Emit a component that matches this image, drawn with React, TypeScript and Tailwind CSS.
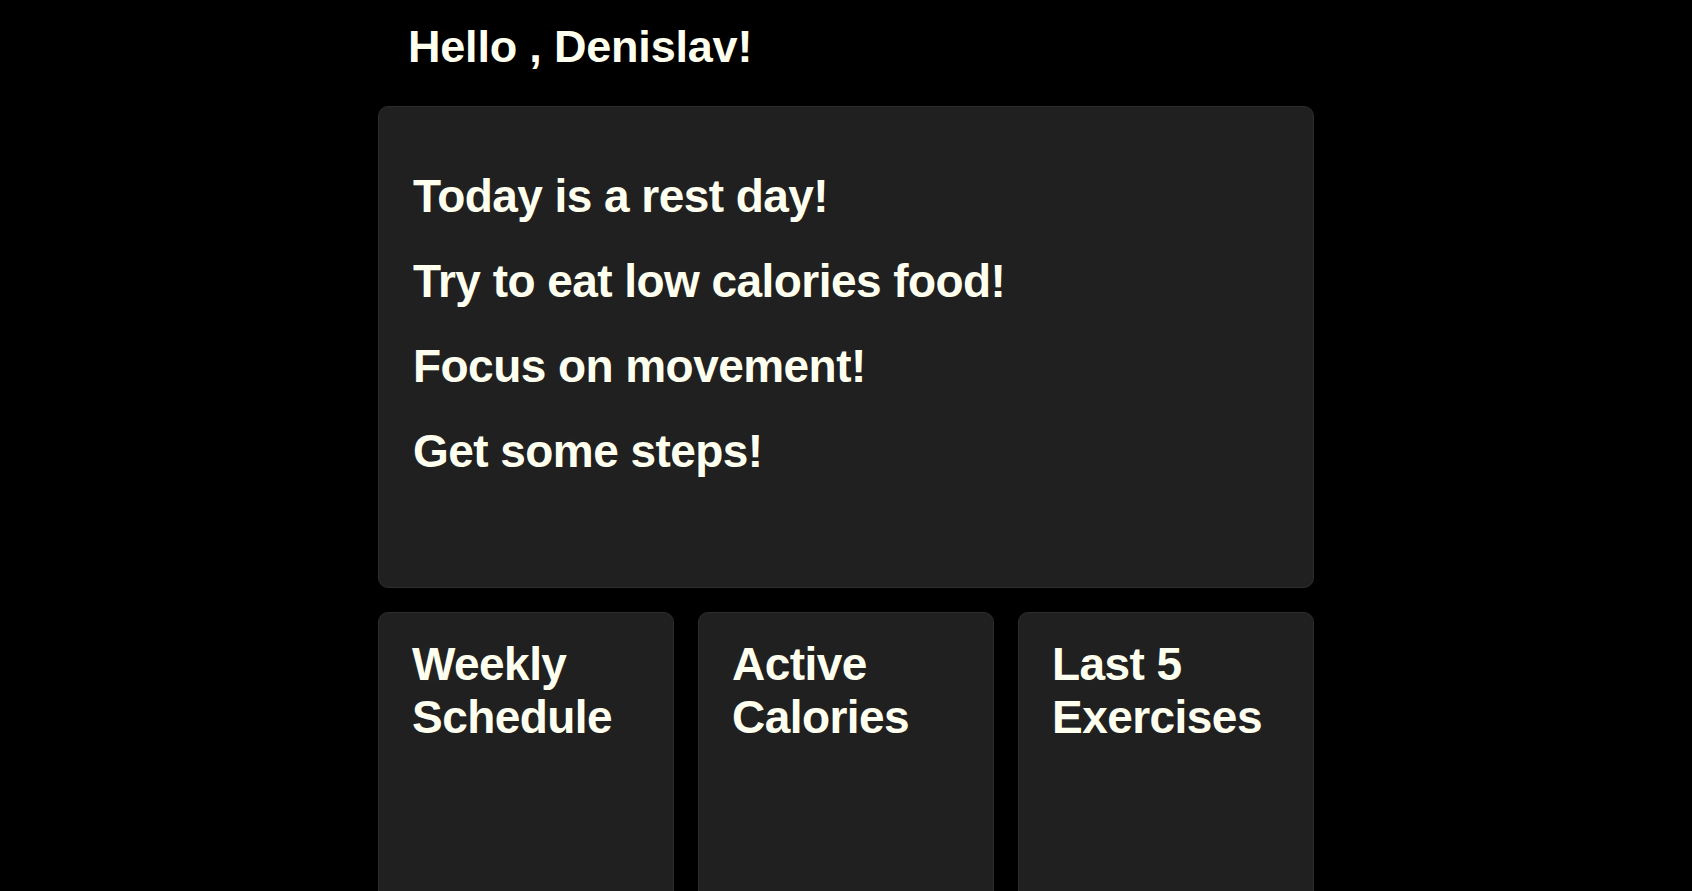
const tips = [
  "Today is a rest day!",
  "Try to eat low calories food!",
  "Focus on movement!",
  "Get some steps!",
];

const widgets = ["Weekly Schedule", "Active Calories", "Last 5 Exercises"];

export default function App() {
  return (
    <div className="min-h-screen bg-black font-['Liberation_Sans',Arial,sans-serif] text-[#fffff0]">
      <main className="mx-auto w-[936px]">
        <h1 className="pl-[30px] pt-[21px] text-[45px] font-bold leading-[1.15] tracking-[-0.2px]">
          Hello , Denislav!
        </h1>

        <section className="mt-[33px] h-[482px] rounded-[10px] border border-[#2c2c2c] bg-[#202020] px-[34px] pt-[63px]">
          <div className="flex flex-col gap-[32px]">
            {tips.map((tip) => (
              <h2
                key={tip}
                className="text-[46px] font-bold leading-[53px] tracking-[-0.55px] [text-shadow:0_0_24px_rgba(255,255,255,0.04)]"
              >
                {tip}
              </h2>
            ))}
          </div>
        </section>

        <section className="mt-[24px] grid grid-cols-3 gap-[24px]">
          {widgets.map((title) => (
            <div
              key={title}
              className="h-[420px] rounded-[10px] border border-[#2c2c2c] bg-[#202020] px-[33px] pt-[25px]"
            >
              <h2 className="text-[46px] font-bold leading-[53px] tracking-[-0.55px] [text-shadow:0_0_24px_rgba(255,255,255,0.04)]">
                {title}
              </h2>
            </div>
          ))}
        </section>
      </main>
    </div>
  );
}
